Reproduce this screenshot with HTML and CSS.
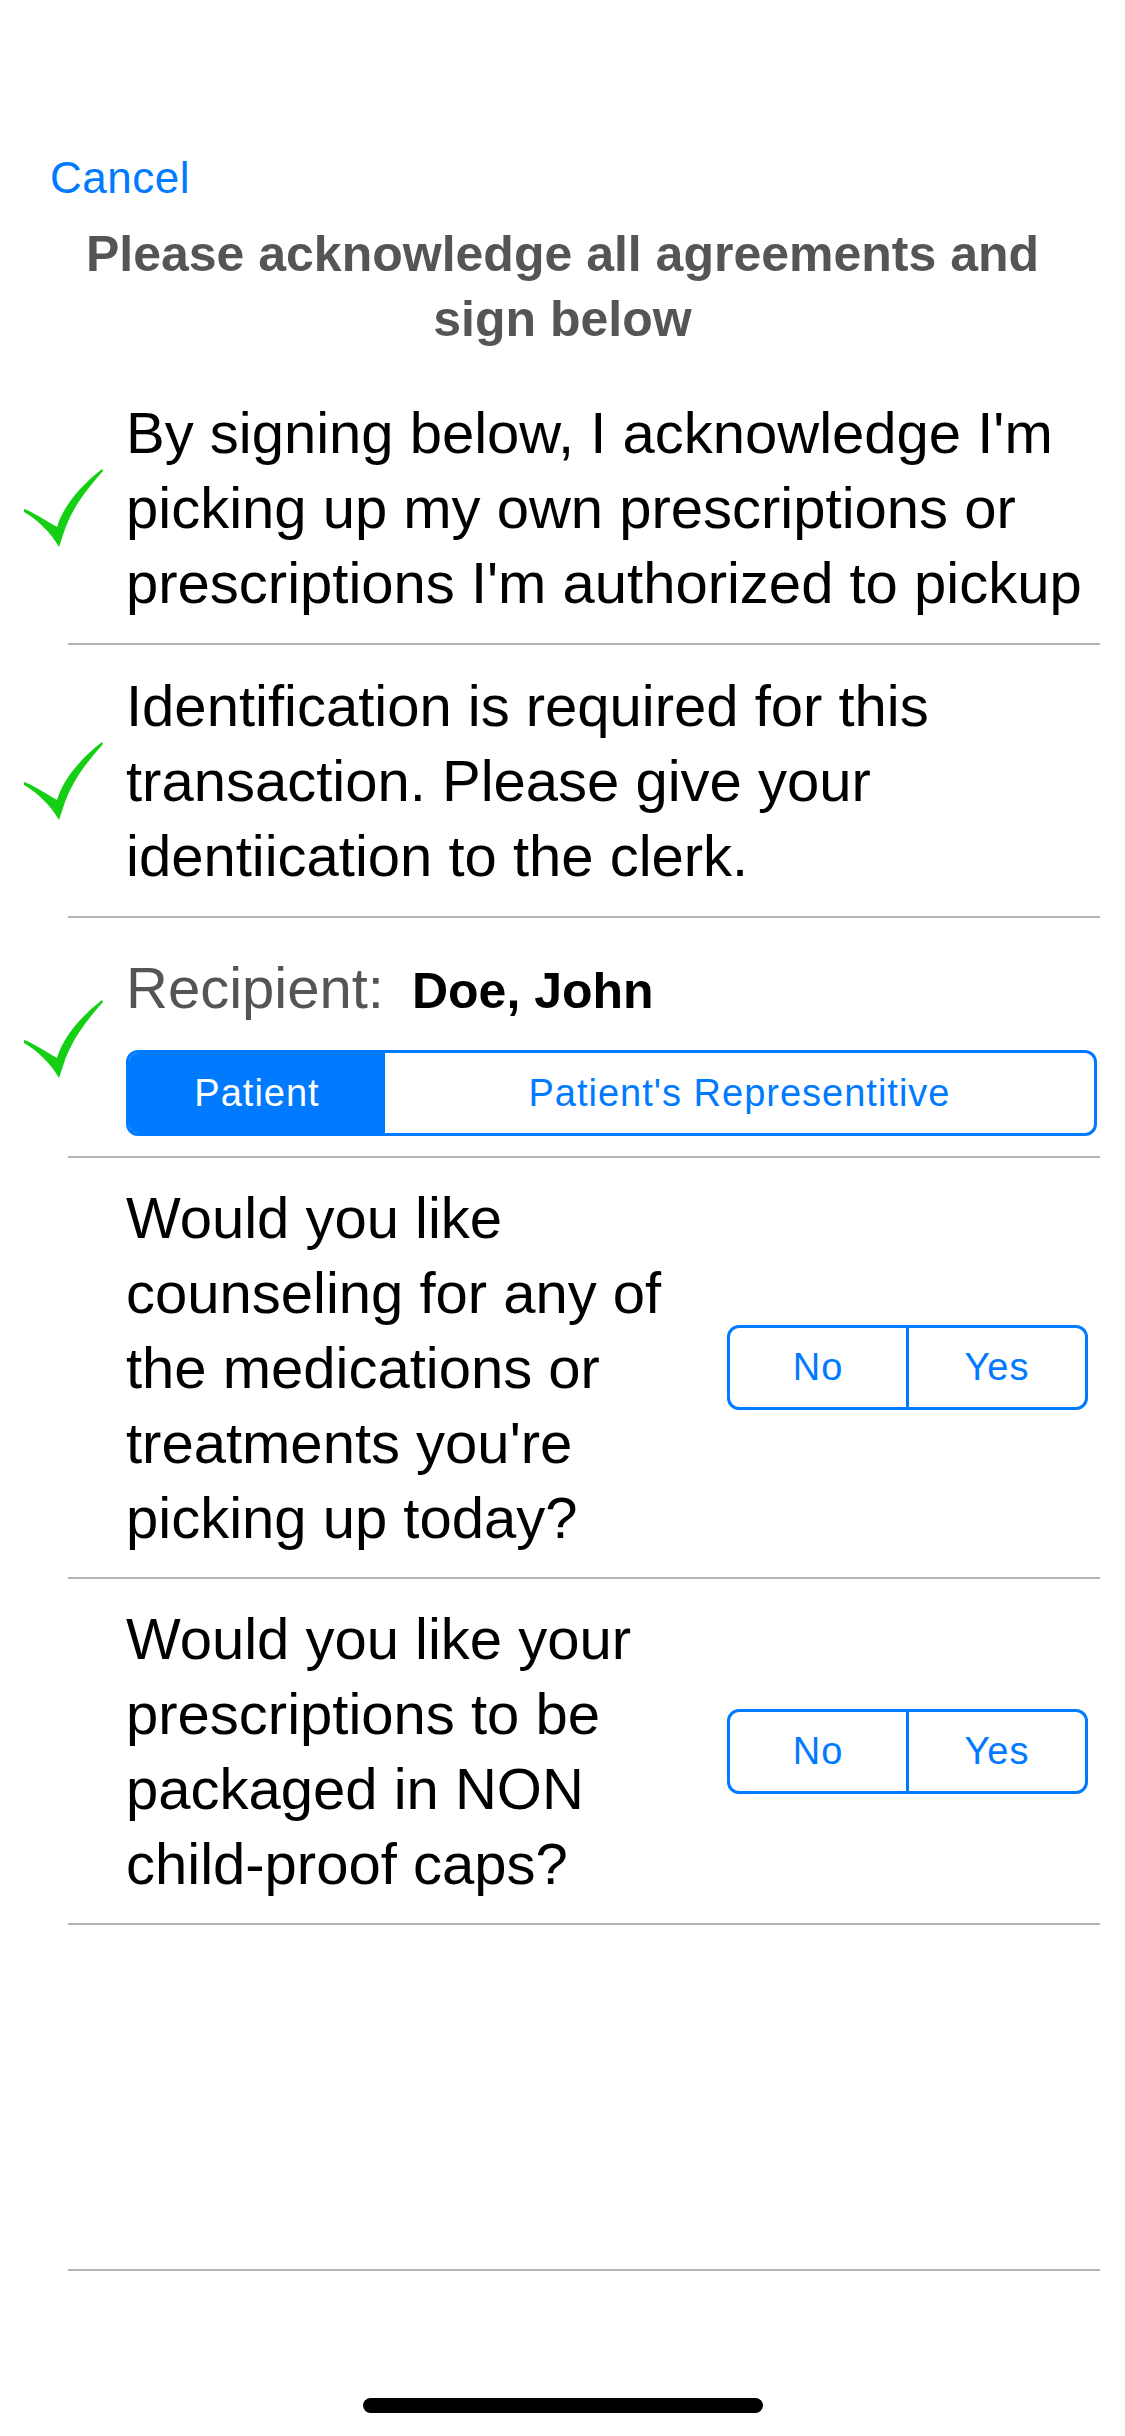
FILE: index.html
```html
<!DOCTYPE html>
<html lang="en">
<head>
   <meta charset="UTF-8">
   <meta name="viewport" content="width=device-width, initial-scale=1.0">
   <title>Pickup Agreements</title>
   <link rel="stylesheet" href="styles.css">
</head>
<body>
   <div class="screen">
      <div class="nav">
         <a class="cancel">Cancel</a>
      </div>
      <h1 class="title">Please acknowledge all agreements and<br>sign below</h1>

      <ul class="list">
         <li class="item">
            <span class="mark">
               <svg viewBox="0 0 80 81" width="80" height="81"><path d="M1,42 C8,44 20,52 34,60 C40,40 56,20 79,2 L80,4 C64,22 48,42 40,68 L36,80 C28,66 14,52 1,45 Z" fill="#14cf14"/></svg>
            </span>
            <div class="body">
               <p class="text">By signing below, I acknowledge I'm<br>picking up my own prescriptions or<br>prescriptions I'm authorized to pickup</p>
            </div>
         </li>

         <li class="item">
            <span class="mark">
               <svg viewBox="0 0 80 81" width="80" height="81"><path d="M1,42 C8,44 20,52 34,60 C40,40 56,20 79,2 L80,4 C64,22 48,42 40,68 L36,80 C28,66 14,52 1,45 Z" fill="#14cf14"/></svg>
            </span>
            <div class="body">
               <p class="text">Identification is required for this<br>transaction. Please give your<br>identiication to the clerk.</p>
            </div>
         </li>

         <li class="item recipient">
            <span class="mark">
               <svg viewBox="0 0 80 81" width="80" height="81"><path d="M1,42 C8,44 20,52 34,60 C40,40 56,20 79,2 L80,4 C64,22 48,42 40,68 L36,80 C28,66 14,52 1,45 Z" fill="#14cf14"/></svg>
            </span>
            <div class="body column">
               <div class="recipient-line">
                  <span class="label">Recipient:</span>
                  <span class="name">Doe, John</span>
               </div>
               <div class="seg wide">
                  <span class="seg-item on">Patient</span>
                  <span class="seg-item">Patient's Representitive</span>
               </div>
            </div>
         </li>

         <li class="item question">
            <span class="mark"></span>
            <div class="body">
               <p class="text">Would you like<br>counseling for any of<br>the medications or<br>treatments you're<br>picking up today?</p>
               <div class="seg yesno">
                  <span class="seg-item">No</span>
                  <span class="seg-item">Yes</span>
               </div>
            </div>
         </li>

         <li class="item question">
            <span class="mark"></span>
            <div class="body">
               <p class="text">Would you like your<br>prescriptions to be<br>packaged in NON<br>child-proof caps?</p>
               <div class="seg yesno">
                  <span class="seg-item">No</span>
                  <span class="seg-item">Yes</span>
               </div>
            </div>
         </li>
      </ul>

      <div class="sign-area"></div>
      <div class="home-bar"></div>
   </div>
</body>
</html>
```

FILE: styles.css
```css
body{
    margin: 0;
    background: #fff;
    font-family: "Liberation Sans", Arial, sans-serif;
}
.screen{
    padding-top: 152px;
}
.nav{
    padding-left: 50px;
    height: 52px;
}
.cancel{
    font-size: 44px;
    line-height: 52px;
    letter-spacing: 0.5px;
    color: #007aff;
    cursor: pointer;
}
.title{
    margin: 18px 0 0;
    font-size: 50px;
    line-height: 65px;
    font-weight: bold;
    color: #555;
    text-align: center;
}

.list{
    list-style: none;
    margin: 20px 25px 0 68px;
    padding: 0;
}
.item{
    display: flex;
    align-items: center;
    padding: 23px 0;
    border-bottom: 2px solid #b4b4b4;
}
.item.recipient{
    padding: 32px 0 20px;
}
.item.recipient .mark{
    margin-top: -10px;
}
.item.question{
    padding: 22px 0;
}
.mark{
    flex: none;
    width: 80px;
    height: 81px;
    margin-left: -45px;
    margin-right: 23px;
}
.mark svg{
    display: block;
}
.body{
    flex: 1;
    display: flex;
    align-items: center;
}
.body.column{
    flex-direction: column;
    align-items: stretch;
}
.text{
    flex: 1;
    margin: 0;
    font-size: 58px;
    line-height: 75px;
    color: #000;
}

.recipient-line{
    display: flex;
    align-items: baseline;
    gap: 28px;
    line-height: 75px;
}
.label{
    font-size: 58px;
    color: #555;
}
.name{
    font-size: 50px;
    font-weight: bold;
    color: #000;
}

.seg{
    display: flex;
    box-sizing: border-box;
    border: 3px solid #007aff;
    border-radius: 12px;
    overflow: hidden;
}
.seg-item{
    display: flex;
    align-items: center;
    justify-content: center;
    font-size: 38px;
    letter-spacing: 1px;
    color: #007aff;
}
.seg.wide{
    margin-top: 21px;
    margin-right: 3px;
    height: 86px;
}
.seg.wide .seg-item{
    flex: 1;
}
.seg.wide .seg-item.on{
    flex: none;
    width: 256px;
    background: #007aff;
    color: #fff;
}
.seg.yesno{
    flex: none;
    width: 361px;
    height: 85px;
    margin-right: 12px;
}
.seg.yesno .seg-item{
    flex: 1;
}
.seg.yesno .seg-item + .seg-item{
    border-left: 3px solid #007aff;
}

.sign-area{
    height: 344px;
    margin: 0 25px 0 68px;
    border-bottom: 2px solid #b4b4b4;
}
.home-bar{
    width: 400px;
    height: 15px;
    margin: 127px auto 0;
    border-radius: 8px;
    background: #000;
}
```
